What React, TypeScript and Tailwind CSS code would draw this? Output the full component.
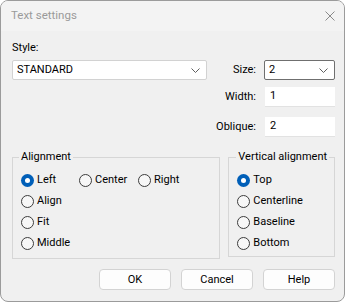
import React from 'react';

const font = { fontFamily: 'Roboto, "Noto Sans", sans-serif' };

function Chevron() {
  return (
    <svg width="9" height="5" viewBox="0 0 9 5" className="shrink-0">
      <path d="M0.5 0.5 L4.5 4.5 L8.5 0.5" fill="none" stroke="#5f5f5f" strokeWidth="1" />
    </svg>
  );
}

function Radio({ label, checked = false }: { label: string; checked?: boolean }) {
  return (
    <label className="flex items-center h-[21px] gap-[3px] whitespace-nowrap">
      {checked ? (
        <span className="w-[13px] h-[13px] rounded-full bg-[#005fb8] flex items-center justify-center shrink-0">
          <span className="w-[5px] h-[5px] rounded-full bg-white" />
        </span>
      ) : (
        <span className="w-[13px] h-[13px] rounded-full border border-[#3c3c3c] bg-[#f7f7f7] shrink-0" />
      )}
      <span>{label}</span>
    </label>
  );
}

function Button({ children }: { children: React.ReactNode }) {
  return (
    <button className="w-[72px] h-[21px] rounded-[4px] border border-[#d3d3d3] bg-[#fdfdfd] text-[11px] text-black leading-none">
      {children}
    </button>
  );
}

export default function App() {
  return (
    <div className="w-[347px] h-[303px] bg-white" style={font}>
      <div className="w-[345px] h-[302px] rounded-[8px] border border-[#9b9b9b] bg-[#f0f0f0] overflow-hidden flex flex-col text-[11px] text-black">
        <div className="h-[30px] bg-[#f3f3f3] flex items-center justify-between pl-[10px] pr-[9px] shrink-0">
          <span className="text-[#9a9a9a] text-[11.5px]">Text settings</span>
          <svg width="10" height="10" viewBox="0 0 10 10">
            <path d="M0.5 0.5 L9.5 9.5 M9.5 0.5 L0.5 9.5" stroke="#8a8a8a" strokeWidth="1" />
          </svg>
        </div>

        <div className="flex-1 pl-[11px] pr-[9px]">
          <div className="mt-[9px] h-[16px] leading-[16px]">Style:</div>

          <div className="mt-[4px] flex items-center h-[20px]">
            <div className="w-[195px] h-[20px] bg-white border border-[#d2d2d2] rounded-[2px] flex items-center justify-between pl-[4px] pr-[6px]">
              <span>STANDARD</span>
              <Chevron />
            </div>
            <div className="ml-auto flex items-center gap-[8px]">
              <span>Size:</span>
              <div className="w-[71px] h-[20px] bg-white border border-[#6f6f6f] rounded-[2px] flex items-center justify-between pl-[4px] pr-[6px]">
                <span>2</span>
                <Chevron />
              </div>
            </div>
          </div>

          <div className="mt-[7px] flex items-center justify-end gap-[9px] h-[20px]">
            <span>Width:</span>
            <div className="w-[70px] h-[20px] bg-white border-b border-[#e2e2e2] flex items-center pl-[5px]">1</div>
          </div>

          <div className="mt-[10px] flex items-center justify-end gap-[9px] h-[20px]">
            <span>Oblique:</span>
            <div className="w-[70px] h-[20px] bg-white border-b border-[#e2e2e2] flex items-center pl-[5px]">2</div>
          </div>

          <div className="mt-[12px] flex items-start gap-[8px]">
            <fieldset className="w-[209px] h-[110px] border border-[#d6d6d6] pl-[8px] pt-[5px]">
              <legend className="-ml-[2px] px-[2px] leading-[16px] whitespace-nowrap">Alignment</legend>
              <div className="flex">
                <div className="w-[58px]"><Radio label="Left" checked /></div>
                <div className="w-[59px]"><Radio label="Center" /></div>
                <Radio label="Right" />
              </div>
              <Radio label="Align" />
              <Radio label="Fit" />
              <Radio label="Middle" />
            </fieldset>
            <fieldset className="w-[107px] h-[108px] border border-[#d6d6d6] pl-[8px] pt-[5px]">
              <legend className="-ml-[1px] px-[2px] leading-[16px] whitespace-nowrap">Vertical alignment</legend>
              <Radio label="Top" checked />
              <Radio label="Centerline" />
              <Radio label="Baseline" />
              <Radio label="Bottom" />
            </fieldset>
          </div>

          <div className="mt-[10px] flex justify-end gap-[10px]">
            <Button>OK</Button>
            <Button>Cancel</Button>
            <Button>Help</Button>
          </div>
        </div>
      </div>
    </div>
  );
}
